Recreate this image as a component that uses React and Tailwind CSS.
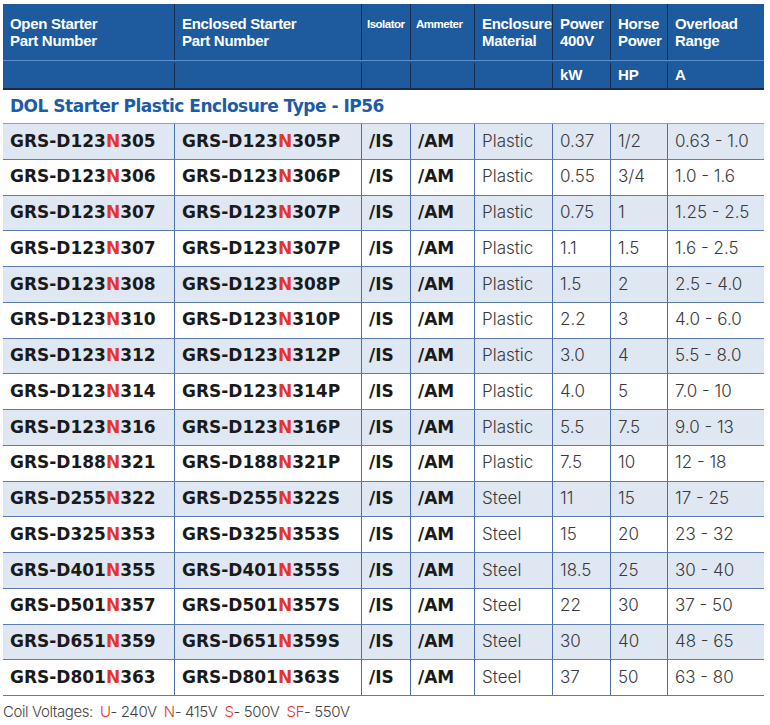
import React from 'react'

const COLS = 'grid grid-cols-[171px_187px_49px_64px_78px_58px_57px_97px]'

const ROWS = [
  ['D123', '305', 'P', 'Plastic', '0.37', '1/2', '0.63 - 1.0'],
  ['D123', '306', 'P', 'Plastic', '0.55', '3/4', '1.0 - 1.6'],
  ['D123', '307', 'P', 'Plastic', '0.75', '1', '1.25 - 2.5'],
  ['D123', '307', 'P', 'Plastic', '1.1', '1.5', '1.6 - 2.5'],
  ['D123', '308', 'P', 'Plastic', '1.5', '2', '2.5 - 4.0'],
  ['D123', '310', 'P', 'Plastic', '2.2', '3', '4.0 - 6.0'],
  ['D123', '312', 'P', 'Plastic', '3.0', '4', '5.5 - 8.0'],
  ['D123', '314', 'P', 'Plastic', '4.0', '5', '7.0 - 10'],
  ['D123', '316', 'P', 'Plastic', '5.5', '7.5', '9.0 - 13'],
  ['D188', '321', 'P', 'Plastic', '7.5', '10', '12 - 18'],
  ['D255', '322', 'S', 'Steel', '11', '15', '17 - 25'],
  ['D325', '353', 'S', 'Steel', '15', '20', '23 - 32'],
  ['D401', '355', 'S', 'Steel', '18.5', '25', '30 - 40'],
  ['D501', '357', 'S', 'Steel', '22', '30', '37 - 50'],
  ['D651', '359', 'S', 'Steel', '30', '40', '48 - 65'],
  ['D801', '363', 'S', 'Steel', '37', '50', '63 - 80'],
]

const bold = "font-['DejaVu_Sans',sans-serif] font-bold text-[17px] text-[#1a1a1a]"
const light = "font-['Inter',sans-serif] font-light text-[17px] text-[#3a3a3a]"

function Part({ frame, code, suffix = '' }) {
  return (
    <span>
      GRS-{frame}<span className="text-[#e2352b]">N</span>{code}{suffix}
    </span>
  )
}

function HeadCell({ children, small, first }) {
  return (
    <div className={`${first ? '' : 'border-l border-[#1b2c4a]'} px-[7px] leading-[17px] ${small ? 'pl-[5px] text-[11.5px] tracking-[-0.5px] pt-[12px]' : 'text-[15px] tracking-[-0.3px] pt-[11px]'}`}>
      {children}
    </div>
  )
}

const Red = ({ children }) => <span className="text-[#e2352b]">{children}</span>

export default function App() {
  return (
    <div className="w-[770px] h-[725px] bg-white pl-[3px] pt-[4px] font-['Liberation_Sans',sans-serif]">
      <div className="w-[761px]">
        {/* header */}
        <div className="bg-[#1d5a9e] text-white font-bold border-b-2 border-[#1b2a46]">
          <div className={`${COLS} h-[57px] border-b border-[#5f8fcc]`}>
            <HeadCell first>Open Starter<br />Part Number</HeadCell>
            <HeadCell>Enclosed Starter<br />Part Number</HeadCell>
            <HeadCell small>Isolator</HeadCell>
            <HeadCell small>Ammeter</HeadCell>
            <HeadCell>Enclosure<br />Material</HeadCell>
            <HeadCell>Power<br />400V</HeadCell>
            <HeadCell>Horse<br />Power</HeadCell>
            <HeadCell>Overload<br />Range</HeadCell>
          </div>
          <div className={`${COLS} h-[27px] text-[15px] pt-[2px]`}>
            <div />
            <div className="border-l border-[#1b2c4a]" />
            <div className="border-l border-[#1b2c4a]" />
            <div className="border-l border-[#1b2c4a]" />
            <div className="border-l border-[#1b2c4a]" />
            <div className="border-l border-[#1b2c4a] px-[7px] flex items-center">kW</div>
            <div className="border-l border-[#1b2c4a] px-[7px] flex items-center">HP</div>
            <div className="border-l border-[#1b2c4a] px-[7px] flex items-center">A</div>
          </div>
        </div>

        {/* section title */}
        <div className="h-[34px] flex items-center px-[7px] border-b border-[#8ea3c4] font-['DejaVu_Sans',sans-serif] font-bold text-[17px] text-[#1e5ba6] tracking-[-0.5px]">
          DOL Starter Plastic Enclosure Type - IP56
        </div>

        {/* rows */}
        {ROWS.map(([frame, code, sfx, mat, kw, hp, range], i) => (
          <div key={i} className={`${COLS} h-[35.75px] border-b border-[#5b7db3] ${i % 2 === 0 ? 'bg-[#dfe7f3]' : 'bg-white'}`}>
            <div className={`${bold} px-[7px] flex items-center`}><Part frame={frame} code={code} /></div>
            <div className={`${bold} border-l border-[#4a6eaa] px-[7px] flex items-center`}><Part frame={frame} code={code} suffix={sfx} /></div>
            <div className={`${bold} border-l border-[#4a6eaa] px-[7px] flex items-center`}>/IS</div>
            <div className={`${bold} border-l border-[#4a6eaa] px-[7px] flex items-center`}>/AM</div>
            <div className={`${light} border-l border-[#4a6eaa] px-[7px] flex items-center`}>{mat}</div>
            <div className={`${light} border-l border-[#4a6eaa] px-[7px] flex items-center`}>{kw}</div>
            <div className={`${light} border-l border-[#4a6eaa] px-[7px] flex items-center`}>{hp}</div>
            <div className={`${light} border-l border-[#4a6eaa] px-[7px] flex items-center`}>{range}</div>
          </div>
        ))}
      </div>

      {/* footer */}
      <p className="mt-[5px] flex gap-[7px] font-['Inter',sans-serif] font-light text-[15px] text-[#444] tracking-[-0.4px]">
        <span>Coil Voltages:</span>
        <span><Red>U</Red>- 240V</span>
        <span><Red>N</Red>- 415V</span>
        <span><Red>S</Red>- 500V</span>
        <span><Red>SF</Red>- 550V</span>
      </p>
    </div>
  )
}
